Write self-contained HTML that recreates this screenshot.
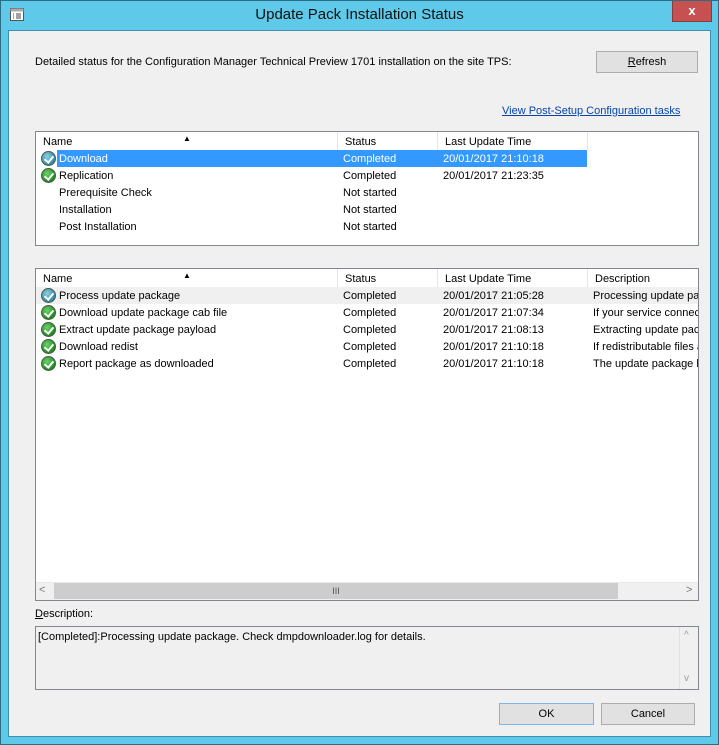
<!DOCTYPE html>
<html><head><style>
*{box-sizing:border-box;margin:0;padding:0}
body{width:719px;height:745px;background:#5fc9ea;font-family:"Liberation Sans",sans-serif;font-size:11px;color:#000;position:relative;overflow:hidden}
.abs{position:absolute}
.frame{left:0;top:0;width:719px;height:745px;border:1px solid #2b6d85}
.title{left:0;top:6px;width:719px;text-align:center;font-size:15px;color:#111}
.close{left:672px;top:1px;width:40px;height:21px;background:#c75050;color:#fff;font-weight:bold;font-size:13px;text-align:center;line-height:20px;border:1px solid #8a3a3a;border-top:none}
.client{left:8px;top:30px;width:703px;height:707px;background:#f0f0f0;border:1px solid #3f8fb0}
.btn{background:#e1e1e1;border:1px solid #adadad;text-align:center;line-height:20px}
.list{background:#fff;border:1px solid #828790;overflow:hidden}
.hdr{position:absolute;top:0;height:18px;border-right:1px solid #e5e5e5;padding-left:7px;line-height:20px;background:#fff}
.row{position:absolute;left:0;height:17px;width:100%;line-height:18px;white-space:nowrap}
.c{position:absolute;top:0}
.ic{position:absolute;left:5px;top:1px;width:15px;height:15px;border-radius:50%;background:radial-gradient(circle at 40% 35%,#6ed26a,#1f8a1f 70%);border:1px solid #4a5a4a}
.ic.b{background:radial-gradient(circle at 40% 35%,#8fd0e0,#2f8aa8 70%)}
.ic:after{content:"";position:absolute;left:4px;top:2px;width:4px;height:7px;border:solid #fff;border-width:0 2px 2px 0;transform:rotate(40deg)}
</style></head><body>
<div class="abs frame"></div>
<svg class="abs" style="left:10px;top:8px" width="14" height="13"><rect x="0.5" y="0.5" width="13" height="12" fill="#fff" stroke="#555"/><rect x="0.5" y="0.5" width="13" height="3" fill="#aaa"/><path d="M3 6h1M6 6h5M3 8h1M6 8h5M3 10h1M6 10h5" stroke="#444"/></svg>
<div class="abs title">Update Pack Installation Status</div>
<div class="abs close">x</div>
<div class="abs client"></div>

<div class="abs" style="left:35px;top:56px">Detailed status for the Configuration Manager Technical Preview 1701 installation on the site TPS:</div>
<div class="abs btn" style="left:596px;top:51px;width:102px;height:22px"><u>R</u>efresh</div>
<div class="abs" style="left:502px;top:105px;color:#0645ad;text-decoration:underline">View Post-Setup Configuration tasks</div>

<div class="abs list" style="left:35px;top:131px;width:664px;height:115px">
 <div class="hdr" style="left:0;width:302px">Name</div>
 <div class="hdr" style="left:302px;width:100px">Status</div>
 <div class="hdr" style="left:402px;width:150px">Last Update Time</div>
 <div class="abs" style="left:147px;top:2px;font-size:8px">▲</div>
 <div class="row" style="top:18px"><div class="abs" style="left:21px;top:0;width:530px;height:17px;background:#3399ff"></div><span class="ic b"></span><span class="c" style="left:23px;color:#fff">Download</span><span class="c" style="left:307px;color:#fff">Completed</span><span class="c" style="left:407px;color:#fff">20/01/2017 21:10:18</span></div>
 <div class="row" style="top:35px"><span class="ic"></span><span class="c" style="left:23px">Replication</span><span class="c" style="left:307px">Completed</span><span class="c" style="left:407px">20/01/2017 21:23:35</span></div>
 <div class="row" style="top:52px"><span class="c" style="left:23px">Prerequisite Check</span><span class="c" style="left:307px">Not started</span></div>
 <div class="row" style="top:69px"><span class="c" style="left:23px">Installation</span><span class="c" style="left:307px">Not started</span></div>
 <div class="row" style="top:86px"><span class="c" style="left:23px">Post Installation</span><span class="c" style="left:307px">Not started</span></div>
</div>

<div class="abs list" style="left:35px;top:268px;width:664px;height:333px">
 <div class="hdr" style="left:0;width:302px">Name</div>
 <div class="hdr" style="left:302px;width:100px">Status</div>
 <div class="hdr" style="left:402px;width:150px">Last Update Time</div>
 <div class="hdr" style="left:552px;width:120px">Description</div>
 <div class="abs" style="left:147px;top:2px;font-size:8px">▲</div>
 <div class="row" style="top:18px;background:#f0f0f0"><span class="ic b"></span><span class="c" style="left:23px">Process update package</span><span class="c" style="left:307px">Completed</span><span class="c" style="left:407px">20/01/2017 21:05:28</span><span class="c" style="left:557px">Processing update pac</span></div>
 <div class="row" style="top:35px"><span class="ic"></span><span class="c" style="left:23px">Download update package cab file</span><span class="c" style="left:307px">Completed</span><span class="c" style="left:407px">20/01/2017 21:07:34</span><span class="c" style="left:557px">If your service connec</span></div>
 <div class="row" style="top:52px"><span class="ic"></span><span class="c" style="left:23px">Extract update package payload</span><span class="c" style="left:307px">Completed</span><span class="c" style="left:407px">20/01/2017 21:08:13</span><span class="c" style="left:557px">Extracting update pac</span></div>
 <div class="row" style="top:69px"><span class="ic"></span><span class="c" style="left:23px">Download redist</span><span class="c" style="left:307px">Completed</span><span class="c" style="left:407px">20/01/2017 21:10:18</span><span class="c" style="left:557px">If redistributable files a</span></div>
 <div class="row" style="top:86px"><span class="ic"></span><span class="c" style="left:23px">Report package as downloaded</span><span class="c" style="left:307px">Completed</span><span class="c" style="left:407px">20/01/2017 21:10:18</span><span class="c" style="left:557px">The update package l</span></div>
 <div class="abs" style="left:0;top:313px;width:662px;height:18px;background:#f0f0f0;border-top:1px solid #e8e8e8"></div>
 <div class="abs" style="left:3px;top:315px;color:#777">&lt;</div>
 <div class="abs" style="left:650px;top:315px;color:#777">&gt;</div>
 <div class="abs" style="left:18px;top:314px;width:564px;height:16px;background:#cdcdcd;text-align:center;line-height:16px;font-size:9px;color:#555">III</div>
</div>

<div class="abs" style="left:35px;top:608px"><u>D</u>escription:</div>
<div class="abs" style="left:35px;top:626px;width:664px;height:64px;background:#f0f0f0;border:1px solid #828790">
 <div class="abs" style="left:2px;top:4px">[Completed]:Processing update package. Check dmpdownloader.log for details.</div>
 <div class="abs" style="left:643px;top:0;width:19px;height:62px;background:#f0f0f0;border-left:1px solid #e0e0e0"></div>
 <div class="abs" style="left:648px;top:3px;color:#999;font-size:10px">^</div>
 <div class="abs" style="left:648px;top:46px;color:#999;font-size:10px">v</div>
</div>

<div class="abs btn" style="left:499px;top:703px;width:95px;height:22px;border-color:#7eb4ea">OK</div>
<div class="abs btn" style="left:601px;top:703px;width:94px;height:22px">Cancel</div>
</body></html>
